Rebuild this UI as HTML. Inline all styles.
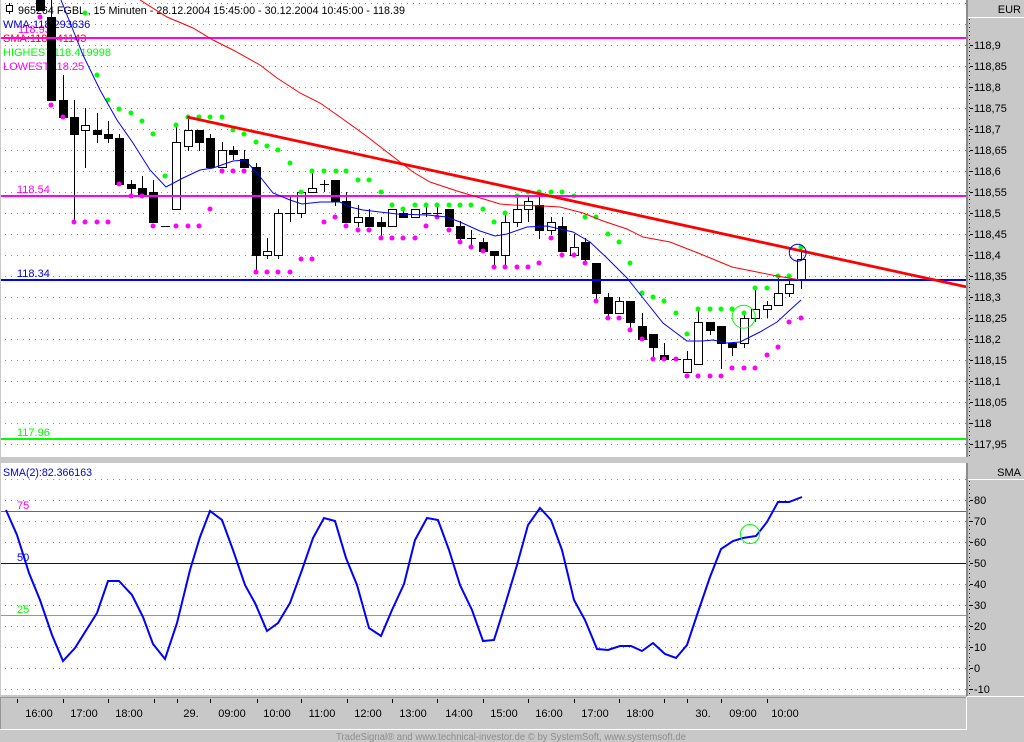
<!DOCTYPE html>
<html><head><meta charset="utf-8"><style>
html,body{margin:0;padding:0;background:#c8c8c8;width:1024px;height:742px;overflow:hidden}
svg{display:block}
text{font-family:"Liberation Sans",Arial,sans-serif;font-size:11px}
</style></head><body>
<svg width="1024" height="742" viewBox="0 0 1024 742" xmlns="http://www.w3.org/2000/svg">
<rect width="1024" height="742" fill="#c8c8c8"/>
<rect x="1" y="0" width="965" height="457" fill="#fff"/>
<rect x="1" y="463" width="965" height="232" fill="#fff"/>
<!-- grid -->
<g stroke="#8c8c8c" stroke-width="1" stroke-dasharray="1 5" shape-rendering="crispEdges">
<path d="M5 3.5H966M5 24.5H966M5 45.5H966M5 66.5H966M5 87.5H966M5 108.5H966M5 129.5H966M5 150.5H966M5 171.5H966M5 192.5H966M5 213.5H966M5 234.5H966M5 255.5H966M5 276.5H966M5 297.5H966M5 318.5H966M5 339.5H966M5 360.5H966M5 381.5H966M5 402.5H966M5 423.5H966M5 444.5H966"/>
<path d="M5 479.5H966M5 500.5H966M5 521.5H966M5 542.5H966M5 584.5H966M5 605.5H966M5 626.5H966M5 647.5H966M5 668.5H966M5 689.5H966"/>
</g>
<!-- legends under candles -->
<text x="18" y="14" fill="#000" textLength="387" lengthAdjust="spacingAndGlyphs">965264  FGBL , 15 Minuten - 28.12.2004 15:45:00 - 30.12.2004 10:45:00 - 118.39</text>
<path d="M6.5 5.5h6v6h-6zM9.5 3v2M9.5 12v2" fill="none" stroke="#000" shape-rendering="crispEdges"/>
<text x="18" y="33" fill="#ff00ff">118.93</text>
<text x="3" y="28" fill="#0000e0">WMA:118.293636</text>
<text x="3" y="42" fill="#ff0000">SMA:118.341143</text>
<text x="3" y="56" fill="#00ff00">HIGHEST:118.419998</text>
<text x="3" y="70" fill="#ff00ff">LOWEST:118.25</text>
<text x="17" y="193" fill="#ff00ff">118.54</text>
<text x="17" y="277" fill="#0000e0">118.34</text>
<text x="17" y="436" fill="#00ff00">117.96</text>
<text x="17" y="509" fill="#ff00ff">75</text>
<text x="17" y="561" fill="#0000e0">50</text>
<text x="17" y="613" fill="#00ff00">25</text>
<text x="3" y="476" fill="#0000e0" textLength="89" lengthAdjust="spacingAndGlyphs">SMA(2):82.366163</text>
<!-- wicks -->
<path shape-rendering="crispEdges" stroke="#000" stroke-width="1" fill="none" d="M51.5 0V100M63.5 75V118M74.5 100V222M85.5 108V168M97.5 113V143M108.5 121V143M119.5 134V185M131.5 180V196M142.5 176V195M153.5 180V223M161 226.5H170M176.5 126V209M188.5 117V151M199.5 130V151M210.5 134V168M222.5 142V167M233.5 146V160M244.5 150V168M256.5 163V272M267.5 238V259M278.5 209V259M290.5 197V222M285 213.5H295M301.5 190V218M312.5 172V192M324.5 180V192M320 184.5H329M335.5 180V206M346.5 192V223M358.5 205V227M369.5 209V227M381.5 217V237M392.5 209V226M403.5 209V218M415.5 209V217M426.5 205V217M422 213.5H431M437.5 205V217M433 213.5H442M449.5 209V227M460.5 221V243M471.5 230V247M467 238.5H476M483.5 238V252M494.5 251V267M505.5 214V267M517.5 198V227M528.5 196V222M539.5 193V239M551.5 217V235M562.5 217V252M574.5 234V256M585.5 238V265M596.5 263V300M608.5 293V318M619.5 297V314M630.5 301V330M642.5 313V340M653.5 334V359M664.5 343V360M672 359.5H681M687.5 351V373M698.5 310V364M710.5 322V335M721.5 326V369M732.5 343V356M744.5 313V348M755.5 288V322M767.5 301V318M778.5 277V305M789.5 280V297M801.5 248V289"/>
<!-- black bodies -->
<path shape-rendering="crispEdges" fill="#000" d="M36 0h9V11h-9zM47 17h9V101h-9zM59 100h9V118h-9zM70 117h9V135h-9zM93 130h9V135h-9zM104 134h9V139h-9zM115 138h9V185h-9zM127 184h9V189h-9zM138 188h9V195h-9zM149 192h9V223h-9zM195 130h9V143h-9zM206 138h9V168h-9zM229 150h9V155h-9zM240 159h9V168h-9zM252 167h9V256h-9zM331 180h9V202h-9zM342 201h9V223h-9zM365 217h9V227h-9zM377 222h9V227h-9zM399 213h9V218h-9zM445 209h9V227h-9zM456 226h9V239h-9zM479 242h9V252h-9zM490 251h9V256h-9zM535 205h9V231h-9zM558 226h9V252h-9zM581 242h9V260h-9zM592 263h9V294h-9zM604 297h9V314h-9zM626 301h9V323h-9zM638 326h9V340h-9zM649 334h9V348h-9zM660 355h9V360h-9zM706 322h9V331h-9zM717 326h9V344h-9zM728 343h9V348h-9z"/>
<!-- hollow bodies -->
<path shape-rendering="crispEdges" fill="#fff" stroke="#000" stroke-width="1" d="M81.5 125.5h8V130.5h-8zM172.5 142.5h8V209.5h-8zM184.5 130.5h8V146.5h-8zM218.5 150.5h8V167.5h-8zM263.5 251.5h8V255.5h-8zM274.5 213.5h8V255.5h-8zM297.5 192.5h8V213.5h-8zM308.5 188.5h8V192.5h-8zM354.5 217.5h8V222.5h-8zM388.5 209.5h8V226.5h-8zM411.5 209.5h8V217.5h-8zM501.5 222.5h8V255.5h-8zM513.5 209.5h8V222.5h-8zM524.5 201.5h8V209.5h-8zM547.5 222.5h8V230.5h-8zM570.5 247.5h8V255.5h-8zM615.5 301.5h8V313.5h-8zM683.5 359.5h8V372.5h-8zM694.5 322.5h8V364.5h-8zM740.5 318.5h8V343.5h-8zM751.5 309.5h8V318.5h-8zM763.5 305.5h8V309.5h-8zM774.5 293.5h8V305.5h-8zM785.5 284.5h8V293.5h-8zM797.5 259.5h8V280.5h-8z"/>
<!-- dots -->
<path fill="none" stroke="#00ff00" stroke-width="5" stroke-linecap="round" d="M85 13h.01M97 75h.01M108 100h.01M119 109h.01M131 113h.01M142 121h.01M153 134h.01M165 176h.01M176 125h.01M188 117h.01M199 117h.01M210 117h.01M222 117h.01M233 130h.01M244 134h.01M256 142h.01M267 146h.01M278 150h.01M290 163h.01M301 192h.01M312 171h.01M324 171h.01M336 171h.01M346 171h.01M358 180h.01M369 180h.01M381 192h.01M392 205h.01M403 209h.01M415 205h.01M426 205h.01M437 205h.01M449 205h.01M460 205h.01M471 205h.01M483 209h.01M494 222h.01M505 213h.01M517 196h.01M528 192h.01M539 192h.01M551 192h.01M562 192h.01M574 196h.01M585 217h.01M596 217h.01M608 234h.01M619 242h.01M630 263h.01M642 293h.01M653 297h.01M664 301h.01M676 313h.01M687 334h.01M698 309h.01M710 309h.01M721 309h.01M732 309h.01M744 313h.01M755 288h.01M767 288h.01M778 276h.01M789 276h.01M801 247h.01"/>
<path fill="none" stroke="#ff00ff" stroke-width="5" stroke-linecap="round" d="M40 17h.01M51 105h.01M63 117h.01M74 222h.01M85 222h.01M97 222h.01M108 222h.01M119 184h.01M131 196h.01M142 196h.01M153 226h.01M176 226h.01M188 226h.01M199 226h.01M210 209h.01M222 171h.01M233 171h.01M244 171h.01M256 272h.01M267 272h.01M278 272h.01M290 272h.01M301 259h.01M312 259h.01M324 222h.01M335 217h.01M346 226h.01M358 230h.01M369 230h.01M381 238h.01M392 238h.01M403 238h.01M415 238h.01M426 226h.01M437 217h.01M449 230h.01M460 242h.01M471 247h.01M483 251h.01M494 267h.01M505 267h.01M517 267h.01M528 267h.01M539 263h.01M551 238h.01M562 255h.01M574 255h.01M585 263h.01M596 301h.01M608 318h.01M619 318h.01M630 330h.01M642 339h.01M653 359h.01M664 359h.01M676 359h.01M687 376h.01M698 376h.01M710 376h.01M721 376h.01M732 368h.01M744 368h.01M755 368h.01M767 355h.01M778 347h.01M789 322h.01M801 318h.01"/>
<!-- horizontal levels -->
<path shape-rendering="crispEdges" fill="none" stroke-width="2" stroke="#ff00ff" d="M1 38H966M1 196H966"/>
<path shape-rendering="crispEdges" fill="none" stroke-width="2" stroke="#0000ff" d="M1 280H966"/>
<path shape-rendering="crispEdges" fill="none" stroke-width="2" stroke="#00ff00" d="M1 439H966"/>
<!-- MA lines -->
<polyline fill="none" stroke="#ff0000" stroke-width="1" points="140,0 167,17 193,28 213,40 233,50 260,65 277,78 300,93 320,103 340,117 365,135 400,162 413,172 430,182 457,191 487,200 500,204 513,205 543,206 560,207 583,213 603,221 627,229 643,237 670,242 703,255 732,267 757,272 777,276 800,280"/>
<polyline fill="none" stroke="#0000ff" stroke-width="1" points="61,0 73,30 83,55 100,90 117,120 133,143 150,170 166,187 183,178 200,170 213,168 233,161 245,160 257,173 273,193 290,200 302,204 320,202 340,202 350,207 363,210 380,212 397,214 427,215 447,217 460,222 480,231 495,236 507,234 527,227 547,226 560,229 573,232 590,242 607,258 627,278 647,303 663,323 687,341 703,341 713,340 727,343 740,342 760,332 777,322 790,310 801,300"/>
<line x1="187" y1="117" x2="967" y2="287" stroke="#ff0000" stroke-width="2.8"/>
<circle cx="743.7" cy="316.7" r="11.5" fill="none" stroke="#00ff00" stroke-width="1"/>
<circle cx="797.7" cy="252.7" r="8.4" fill="none" stroke="#0000e0" stroke-width="1"/>
<!-- lower panel -->
<path shape-rendering="crispEdges" fill="none" stroke="#ff00ff" d="M1 511.5H966"/>
<path shape-rendering="crispEdges" fill="none" stroke="#0000c8" d="M1 563.5H966"/>
<path shape-rendering="crispEdges" fill="none" stroke="#00ff00" d="M1 615.5H966"/>
<polyline fill="none" stroke="#0000ff" stroke-width="2" points="6,510 17,535 29,573 40,600 52,635 63,661 75,648 97,613 108,581 119,581 132,595 143,617 153,644 165,659 177,623 190,570 200,537 210,511 222,520 233,550 245,585 255,603 267,631 278,623 290,603 302,570 313,538 324,518 335,521 346,558 357,585 369,628 381,636 392,610 404,584 415,540 427,518 438,520 449,550 460,585 472,610 483,641 494,640 505,605 517,565 528,525 540,508 551,520 562,550 574,600 585,620 597,649 608,650 620,646 631,646 642,651 653,643 665,654 676,658 687,645 697,615 710,577 721,549 733,541 743,538 756,536 767,522 778,502 789,502 802,497"/>
<circle cx="750" cy="534" r="9.5" fill="none" stroke="#00ff00" stroke-width="1"/>
<!-- right axis -->
<path shape-rendering="crispEdges" fill="none" stroke="#8c8c8c" stroke-width="2" d="M967 0V457M967 463V696"/>
<path shape-rendering="crispEdges" fill="none" stroke="#fff" d="M968 17.5H1024M968 479.5H1024M967 696.5H1024"/>
<path shape-rendering="crispEdges" fill="none" stroke="#000" stroke-dasharray="1 3" d="M969.5 19V457M969.5 481V696"/>
<path shape-rendering="crispEdges" fill="none" stroke="#000" d="M970 45.5h3M970 66.5h3M970 87.5h3M970 108.5h3M970 129.5h3M970 150.5h3M970 171.5h3M970 192.5h3M970 213.5h3M970 234.5h3M970 255.5h3M970 276.5h3M970 297.5h3M970 318.5h3M970 339.5h3M970 360.5h3M970 381.5h3M970 402.5h3M970 423.5h3M970 444.5h3M970 500.5h3M970 521.5h3M970 542.5h3M970 563.5h3M970 584.5h3M970 605.5h3M970 626.5h3M970 647.5h3M970 668.5h3M970 689.5h3"/>
<g fill="#000">
<text x="1021" y="13" text-anchor="end">EUR</text>
<text x="1021" y="476" text-anchor="end">SMA</text>
<text x="974" y="49">118,9</text><text x="974" y="70">118,85</text><text x="974" y="91">118,8</text><text x="974" y="112">118,75</text><text x="974" y="133">118,7</text><text x="974" y="154">118,65</text><text x="974" y="175">118,6</text><text x="974" y="196">118,55</text><text x="974" y="217">118,5</text><text x="974" y="238">118,45</text><text x="974" y="259">118,4</text><text x="974" y="280">118,35</text><text x="974" y="301">118,3</text><text x="974" y="322">118,25</text><text x="974" y="343">118,2</text><text x="974" y="364">118,15</text><text x="974" y="385">118,1</text><text x="974" y="406">118,05</text><text x="974" y="427">118</text><text x="974" y="448">117,95</text>
<text x="974" y="504">80</text><text x="974" y="525">70</text><text x="974" y="546">60</text><text x="974" y="567">50</text><text x="974" y="588">40</text><text x="974" y="609">30</text><text x="974" y="630">20</text><text x="974" y="651">10</text><text x="974" y="672">0</text><text x="974" y="693">-10</text>
</g>
<!-- time axis -->
<path shape-rendering="crispEdges" fill="none" stroke="#969696" d="M0 697.5H966M0.5 697V729"/>
<path shape-rendering="crispEdges" fill="none" stroke="#fff" d="M0 729.5H967M966.5 697V730"/>
<path shape-rendering="crispEdges" fill="none" stroke="#000" d="M17.5 699v4M63.5 699v4M108.5 699v4M154.5 699v4M177.5 699v4M210.5 699v4M257.5 699v4M301.5 699v4M347.5 699v4M392.5 699v4M437.5 699v4M483.5 699v4M528.5 699v4M574.5 699v4M619.5 699v4M664.5 699v4M687.5 699v4M721.5 699v4M767.5 699v4"/>
<g fill="#000" text-anchor="middle">
<text x="39" y="717">16:00</text><text x="84" y="717">17:00</text><text x="129" y="717">18:00</text><text x="191" y="717">29.</text><text x="232" y="717">09:00</text><text x="277" y="717">10:00</text><text x="322" y="717">11:00</text><text x="368" y="717">12:00</text><text x="413" y="717">13:00</text><text x="459" y="717">14:00</text><text x="504" y="717">15:00</text><text x="549" y="717">16:00</text><text x="595" y="717">17:00</text><text x="640" y="717">18:00</text><text x="703" y="717">30.</text><text x="743" y="717">09:00</text><text x="785" y="717">10:00</text>
</g>
<text x="336" y="740" fill="#8c8c8c" style="font-size:10px" textLength="350" lengthAdjust="spacingAndGlyphs">TradeSignal® and www.technical-investor.de © by SystemSoft, www.systemsoft.de</text>
</svg>
</body></html>
